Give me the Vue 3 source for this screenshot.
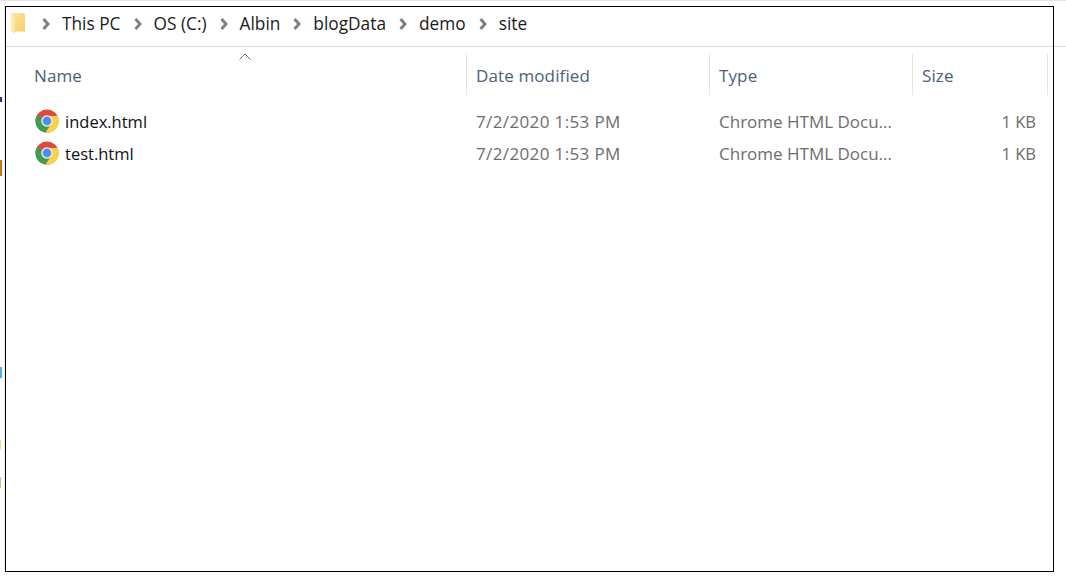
<script setup>
const crumbs = ['This PC', 'OS (C:)', 'Albin', 'blogData', 'demo', 'site']
const columns = [
  { label: 'Name', width: 461 },
  { label: 'Date modified', width: 243 },
  { label: 'Type', width: 203 },
  { label: 'Size', width: 135 },
]
const files = [
  { name: 'index.html', date: '7/2/2020 1:53 PM', type: 'Chrome HTML Docu...', size: '1 KB' },
  { name: 'test.html', date: '7/2/2020 1:53 PM', type: 'Chrome HTML Docu...', size: '1 KB' },
]
const slivers = [
  { top: 97, width: 2, height: 5, background: '#1f3a6e' },
  { top: 160, width: 2, height: 16, background: '#c47a14' },
  { top: 367, width: 2, height: 11, background: '#4fb0f0' },
  { top: 440, width: 1, height: 9, background: '#f6cf94' },
  { top: 477, width: 1, height: 11, background: '#c9c486' },
]
</script>

<template>
  <div class="page">
    <div class="explorer">
      <nav class="address">
        <svg class="folder" width="15" height="21" viewBox="0 0 15 21">
          <defs>
            <linearGradient id="folder-body" x1="0" y1="0" x2="1" y2="1">
              <stop offset="0" stop-color="#fbe6a6" />
              <stop offset="1" stop-color="#f4cf63" />
            </linearGradient>
          </defs>
          <path d="M0 0H12.500L14 1.500V18.500H4V21L0 17.500Z" fill="url(#folder-body)" />
          <path d="M0 0V17.500L3.500 21V3.500L1 0Z" fill="#fdeab3" />
        </svg>
        <template v-for="c in crumbs" :key="c">
          <svg class="chev" width="8" height="12" viewBox="0 0 8 12">
            <path d="M1.500 1L6 6L1.500 11" fill="none" stroke="#808080" stroke-width="3" />
          </svg>
          <span class="crumb">{{ c }}</span>
        </template>
      </nav>
      <div class="head">
        <div v-for="col in columns" :key="col.label" class="head-cell" :style="{ width: col.width + 'px' }">{{ col.label }}</div>
        <svg class="sort" width="12" height="7" viewBox="0 0 12 7">
          <path d="M.5 6.500L6 1L11.500 6.500" fill="none" stroke="#6f6f6f" stroke-width="1" />
        </svg>
      </div>
      <div class="rows">
        <div v-for="f in files" :key="f.name" class="row">
          <div class="name">
            <svg class="chrome" width="24" height="24" viewBox="0 0 24 24">
              <circle cx="12" cy="12" r="11.500" fill="#dc4c3e" />
              <path d="M12 12L2.040 6.250A11.500 11.500 0 0 0 10.600 23.420L15.500 14Z" fill="#3f9f4f" />
              <path d="M12 7H22.800A11.500 11.500 0 0 1 10.600 23.420L16.300 14.500Z" fill="#fbd14b" />
              <circle cx="12" cy="12" r="5.700" fill="#f4f4f4" />
              <circle cx="12" cy="12" r="4.400" fill="#4f8ef0" />
            </svg>
            <span>{{ f.name }}</span>
          </div>
          <div class="date">{{ f.date }}</div>
          <div class="type">{{ f.type }}</div>
          <div class="size">{{ f.size }}</div>
        </div>
      </div>
    </div>
    <div class="edge"></div>
    <div v-for="s in slivers" :key="s.top" class="sliver" :style="{ top: s.top - 1 + 'px', width: s.width + 'px', height: s.height + 'px', background: s.background }"></div>
    <div class="frame"></div>
  </div>
</template>

<style>
html, body { margin: 0; background: #fff; overflow: hidden; }
</style>

<style scoped>
.page {
  position: relative;
  width: 1066px;
  height: 579px;
  background: #fff;
  font-family: "Open Sans", "Noto Sans", sans-serif;
  overflow: hidden;
  border-top: 1px solid #e4e4e4;
  box-sizing: border-box;
}
.explorer {
  margin-left: 6px;
  padding-top: 6px;
}
.address {
  height: 33px;
  padding: 0 0 6px 5px;
  border-bottom: 1px solid #d9d9d9;
  display: flex;
  align-items: center;
  font-size: 17.300px;
  color: #1a1a1a;
}
.folder { margin-right: 3px; }
.chev { margin: 1px 12px 0 13px; }
.crumb { white-space: nowrap; }
.head {
  position: relative;
  display: flex;
  height: 41px;
  margin-top: 7px;
}
.sort { position: absolute; left: 233px; top: -1px; }
.head-cell {
  box-sizing: border-box;
  padding: 2px 0 0 9px;
  font-size: 17px;
  letter-spacing: .12px;
  line-height: 40px;
  color: #4c607a;
  border-right: 1px solid #e5e5e5;
  flex: none;
}
.head-cell:first-child { padding-left: 28px; }
.rows { padding-top: 10px; }
.row {
  display: grid;
  grid-template-columns: 461px 243px 203px 123px;
  height: 32px;
  align-items: center;
  font-size: 16.500px;
  color: #6d6d6d;
}
.name { display: flex; align-items: center; padding-left: 29px; color: #111; }
.chrome { margin-right: 6px; flex: none; }
.date { padding-left: 9px; font-size: 17px; letter-spacing: .37px; }
.type { padding-left: 9px; white-space: nowrap; font-size: 17px; }
.size { text-align: right; }
.edge {
  position: absolute;
  left: 4px;
  top: 0;
  width: 1px;
  height: 575px;
  background: #ececec;
}
.sliver { position: absolute; left: 0; }
.frame {
  position: absolute;
  left: 5px;
  top: 5px;
  width: 1049px;
  height: 566px;
  box-sizing: border-box;
  border: 1px solid #000;
  pointer-events: none;
}
</style>
